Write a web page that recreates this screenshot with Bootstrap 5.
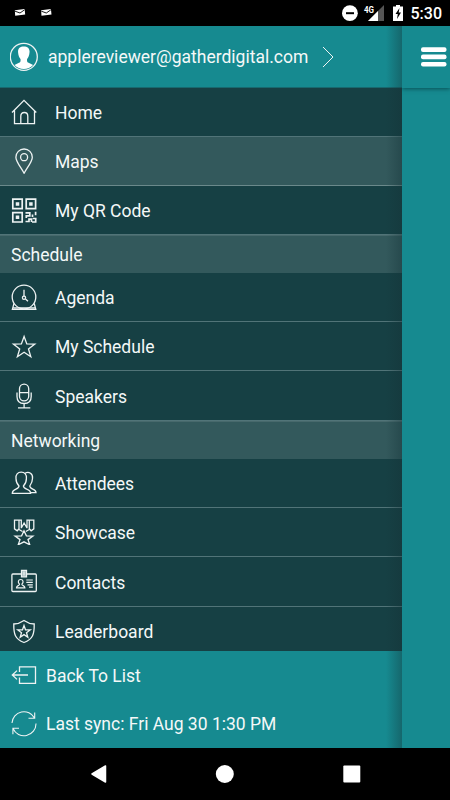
<!DOCTYPE html>
<html lang="en">
<head>
<meta charset="utf-8">
<meta name="viewport" content="width=device-width, initial-scale=1">
<title>Event menu</title>
<link href="https://cdn.jsdelivr.net/npm/bootstrap@5.3.0/dist/css/bootstrap.min.css" rel="stylesheet">
<style>
body{font-family:Roboto,"Liberation Sans",sans-serif;font-size:17.5px;line-height:24px;background:#000;color:#f4f8f8;width:450px;height:800px}
svg{display:block;flex:none;fill:none;stroke:#eef3f3;stroke-width:1.3}
.status{height:26px;padding:0 8px 0 14px}
.plain{stroke:none}
.clock{font-size:16px;font-weight:500;color:#fff;line-height:26px;padding:1px 0 0 1px}
.stage{height:722px;background:#168a90}
.drawer{width:402px;background:#168a90}
.shade{left:386px;width:16px;background:linear-gradient(to right,rgba(20,50,55,0),rgba(20,50,55,.4))}
.account{height:62px;padding-left:10px;gap:10px;border-bottom:1px solid #17696f}
.chevron{margin-left:4px}
.menu-row{height:49px;padding:0 11px;gap:18px;background:#164044;border-bottom:1px solid #517478}
.menu-row span{padding-top:2px}
.menu-row.tall{height:50px}
.menu-row.active{background:#33595c;border-bottom-color:#6b898b}
.menu-row.last{height:44px;border:0;padding-top:5px}
.menu-row.last span{padding-top:1px}
.section{height:38px;padding:0 11px;background:#33595c;border-top:1px solid #47696c}
.foot{gap:9px;padding:0 11px}
.foot span{padding-top:1px}
.page-bar{height:62px;box-shadow:0 1px 4px rgba(0,50,55,.65)}
.bars{margin-left:18.500px}
.keys{height:52px}
</style>
</head>
<body class="d-flex flex-column overflow-hidden">
<header class="status d-flex align-items-center">
  <svg class="plain" width="40" height="26"><g id="mail"><path d="M.8 10.300 10.600 9.100 11.200 14.600 1.200 15.800Z" fill="#fff"/><path d="M1 11.200 6 13 10.600 9.800" stroke="#000" stroke-width=".9"/></g><use href="#mail" x="26.300"/></svg>
  <svg class="plain ms-auto" width="68" height="26"><circle cx="7.900" cy="13.200" r="7.900" fill="#fff"/><path d="M4 12.200h8v2H4z" fill="#000"/><path d="M42 5v16H26z" fill="#555"/><path d="M36 11v10H26z" fill="#fff"/><path d="M21 5h12v8H21z" fill="#000"/><text x="22" y="12.500" font-size="9" font-weight="700" fill="#fff" textLength="10" lengthAdjust="spacingAndGlyphs">4G</text><path d="M51 6.500h3V5h4v1.500h3V21H51z" fill="#fff"/><path d="m57.500 8-4 6h2.300L55 19l4-6.500h-2.300z" fill="#000"/></svg>
  <span class="clock">5:30</span>
</header>

<main class="stage d-flex position-relative">
  <div class="drawer d-flex flex-column">
    <div class="account d-flex align-items-center">
      <svg width="28" height="30" viewBox="0 0 28 30"><circle cx="13.800" cy="14.800" r="13.500"/><path d="M13.800 4.500c-4 0-6.200 2.300-5.700 6 .2 3 1.100 5 2.400 6.600.3 2-.2 3.100-1.500 3.700l-4.500 2.300a13 13 0 0 0 18.600 0l-4.500-2.300c-1.300-.6-1.800-1.700-1.500-3.700 1.300-1.600 2.200-3.600 2.400-6.600.5-3.700-1.700-6-5.700-6z" fill="#fff" stroke="none"/></svg>
      <span>applereviewer@gatherdigital.com</span>
      <svg class="chevron" width="12" height="22"><path d="m1 1 10 10L1 21" stroke-width="1"/></svg>
    </div>
    <nav>
      <div class="menu-row d-flex align-items-center"><svg width="26" height="26"><path d="M1 13.500 13 1.300l12.300 12.200M3.500 11.500v13.200h20V11.500M9.800 24.700v-7.500q0-3.700 3.500-3.700t3.500 3.700v7.500"/></svg><span>Home</span></div>
      <div class="menu-row active d-flex align-items-center"><svg width="26" height="26"><path d="M13.100 25.200C9.500 18.800 4.900 13.500 4.900 9.200a8.200 8.200 0 0 1 16.400 0c0 4.300-4.600 9.600-8.200 16z"/><circle cx="13.100" cy="9.200" r="3.500"/></svg><span>Maps</span></div>
      <div class="menu-row d-flex align-items-center"><svg width="26" height="26"><path stroke-width="1.700" d="M1.800 2.200h9.400v9.400H1.800zM15.200 2.200h9.400v9.400h-9.400zM1.800 15.600h9.400V25H1.800zM5.600 6h1.800v1.800H5.600zM19 6h1.800v1.800H19zM5.600 19.400h1.800v1.800H5.600zM14.500 15.900h4.300v3h-3.500v2M21.500 20v-2.500M24.600 14.800v3.500M14.500 24.500h3.500v-2.300h2.500V25M21 25h3.700v-3.500h-3"/></svg><span>My QR Code</span></div>
      <div class="section d-flex align-items-center">Schedule</div>
      <div class="menu-row d-flex align-items-center"><svg width="26" height="26"><circle cx="13" cy="13" r="11.800"/><path d="M3 19.300 1.400 25.300h23.400L23.200 19.300M2.500 23.800h21.500M13 5.800v6.500M14.500 15l2.500 2.300"/><circle cx="13" cy="13.700" r="1.600"/></svg><span>Agenda</span></div>
      <div class="menu-row d-flex align-items-center"><svg width="26" height="26"><path d="m13.100 3.500 2.700 7.400 8 .2-6.300 4.900 2.300 7.700-6.700-4.500-6.700 4.500L8.700 16 2.400 11.100l8-.2z"/></svg><span>My Schedule</span></div>
      <div class="menu-row tall d-flex align-items-center"><svg width="26" height="26"><path d="M8.500 5.800a4.600 4.600 0 0 1 9.200 0v7.400a4.600 4.600 0 0 1-9.200 0zM8.500 9.700h9.200M6 9.500v4q0 7 7.100 7t7.100-7v-4M13.100 20.500v4.300M7 24.900h12.300"/></svg><span>Speakers</span></div>
      <div class="section d-flex align-items-center">Networking</div>
      <div class="menu-row d-flex align-items-center"><svg width="26" height="26"><path d="M1.300 23.300c0-4.800 6.700-3.500 6.700-7.300C6.500 14.500 5 11.700 5 8.500 4.500 4.500 6.800 2.200 10.200 2.200s5.700 2.300 5.200 6.300c0 3.200-1.500 6-3 7.500 0 3.800 7.200 2.500 7.200 7.300zM14 3.200c4-2.200 8.200.5 7.500 5.300 0 3.200-1.300 5.500-2.700 7.500 0 3.800 6 2.500 6.200 6.600h-5"/></svg><span>Attendees</span></div>
      <div class="menu-row d-flex align-items-center"><svg width="26" height="26"><path d="m13 11.800 2.400 5 6.500.3-4.900 3.500 1.800 5.200-5.800-3-5.800 3L9 20.600l-4.900-3.500 6.500-.3zM3.500 1.200H8v8.600l-1.800 2-2.700-2zM18.300 1.200h4.500v8.600l-2.700 2-1.800-2zM8 1.200h2.300v8M18.300 1.200h-2.300v8M10.300 9l2.800-5L16 9M8 10.500l3.500 2M18.300 10.500l-3.500 2"/></svg><span>Showcase</span></div>
      <div class="menu-row tall d-flex align-items-center"><svg width="26" height="26"><rect x=".9" y="5" width="24.400" height="17.500" rx="1"/><path d="M10.500 1.300h5v6.500h-5zM13 2.500v4" fill="#a9bdbf"/><path d="M5.500 18.800c0-2.500 3-1.800 3-3.600-2-2-1.300-4.700 1.200-4.700s3.200 2.700 1.200 4.700c0 1.800 3 1.100 3 3.600zM15.300 11h6.500M15.300 13.400h6.500M16.500 15.800h5.300M18 18.200h3.800" stroke-width="1.200"/></svg><span>Contacts</span></div>
      <div class="menu-row last d-flex align-items-center"><svg width="26" height="26"><path d="M13 1.500Q8 5 2.800 5C2.600 15 4 20 13 23.500 22 20 23.400 15 23.200 5 18 5 13 1.500 13 1.500z"/><path d="m13 6.500 1.500 4.300 4.700.1-3.700 2.800 1.300 4.500-3.800-2.600-3.800 2.600 1.300-4.500-3.700-2.800 4.700-.1z"/></svg><span>Leaderboard</span></div>
    </nav>
    <footer class="flex-fill d-flex flex-column">
      <div class="foot h-50 d-flex align-items-center"><svg width="26" height="26"><path d="M8.500 10V4.800h16v16.500h-16V15.500M17 13H1.300M6 8.600l-4.700 4.400L6 17.400"/></svg><span>Back To List</span></div>
      <div class="foot h-50 d-flex align-items-center"><svg width="26" height="26"><path stroke-width="1.100" d="M1 12A12 12 0 0 1 23.500 7M17.500 7.300h6.200V1.500M25 12.500A12 12 0 0 1 2 17.500M8 17.300H1.900v6"/></svg><span>Last sync: Fri Aug 30 1:30 PM</span></div>
    </footer>
  </div>
  <div class="shade position-absolute top-0 bottom-0"></div>
  <div class="flex-fill overflow-hidden">
    <div class="page-bar d-flex align-items-center"><svg class="bars plain" width="26" height="20" fill="none"><g fill="#fff"><rect y=".3" width="25.500" height="4.600" rx="2"/><rect y="7.600" width="25.500" height="4.600" rx="2"/><rect y="14.900" width="25.500" height="4.600" rx="2"/></g></svg></div>
  </div>
</main>

<footer class="keys d-flex align-items-center">
  <svg class="plain" width="450" height="52"><g fill="#fff"><path d="M92 26 105.500 18v16z" stroke="#fff" stroke-width="1.500" stroke-linejoin="round"/><circle cx="224.800" cy="26" r="9"/><rect x="343.300" y="17.500" width="17" height="17" rx="1"/></g></svg>
</footer>
</body>
</html>
